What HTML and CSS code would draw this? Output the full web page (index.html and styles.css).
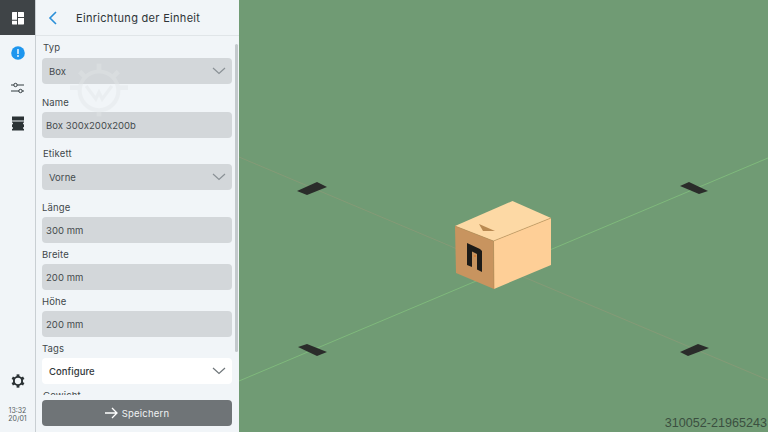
FILE: index.html
```html
<!DOCTYPE html>
<html lang="de">
<head>
    <meta charset="UTF-8">
    <title>Einrichtung der Einheit</title>
    <link rel="stylesheet" href="styles.css">
</head>
<body>
    <!-- Linke Leiste -->
    <nav class="rail">
        <div class="rail-item rail-home">
            <svg width="14" height="14" viewBox="0 0 14 14"><path fill="#fff" d="M1.500 1H6v7.800H1V1.500zM7 1h5.500l.5.500V6H7zM7 7h6v6l-.5.500H7zM1 9.800h5v3.700H1.500L1 13z"/></svg>
        </div>
        <div class="rail-item">
            <svg width="14" height="14" viewBox="0 0 14 14"><circle cx="7" cy="7" r="6.800" fill="#1e96ee"/><rect x="6.300" y="3" width="1.400" height="5" rx=".6" fill="#fff"/><circle cx="7" cy="10" r=".9" fill="#fff"/></svg>
        </div>
        <div class="rail-item">
            <svg width="15" height="14" viewBox="0 0 15 14" fill="none" stroke="#333c40" stroke-width="1"><path d="M1 4h2.800M7.200 4H14M1 10h8M12 10h2"/><circle cx="5.500" cy="4" r="1.700"/><circle cx="10.500" cy="10" r="1.700"/></svg>
        </div>
        <div class="rail-item rail-book">
            <svg width="14" height="15" viewBox="0 0 14 15"><path fill="#2b3235" d="M1 .5h12v4H1zM1 5.500h12v9H1z"/><g fill="#f1f5f8"><circle cx="1" cy="7.500" r="1"/><circle cx="13" cy="7.500" r="1"/><circle cx="1" cy="12" r="1"/><circle cx="13" cy="12" r="1"/></g></svg>
        </div>
        <div class="rail-spacer"></div>
        <div class="rail-gear">
            <svg width="14" height="14" viewBox="0 0 16 16"><circle cx="8" cy="8" r="4.700" fill="none" stroke="#2b3235" stroke-width="2.200"/><g fill="#2b3235"><rect x="6.400" y=".4" width="3.200" height="3.200"/><rect x="6.400" y="12.400" width="3.200" height="3.200"/><rect x="6.400" y=".4" width="3.200" height="3.200" transform="rotate(60 8 8)"/><rect x="6.400" y=".4" width="3.200" height="3.200" transform="rotate(120 8 8)"/><rect x="6.400" y=".4" width="3.200" height="3.200" transform="rotate(240 8 8)"/><rect x="6.400" y=".4" width="3.200" height="3.200" transform="rotate(300 8 8)"/></g></svg>
        </div>
        <div class="rail-clock">13:32<br>20/01</div>
    </nav>

    <!-- Formular -->
    <section class="panel">
        <header class="panel-head">
            <svg class="back" width="10" height="14" viewBox="0 0 10 14" fill="none" stroke="#2a8fd8" stroke-width="1.600"><path d="M8 1 2 7l6 6"/></svg>
            <h1>Einrichtung der Einheit</h1>
        </header>
        <div class="panel-body">
            <div class="field field-first">
                <label class="label-in label-tall">Typ</label>
                <div class="control select">Box <svg class="chev" width="14" height="8" viewBox="0 0 14 8" fill="none" stroke="#8a9196" stroke-width="1.200"><path d="M1 1l6 5.500L13 1"/></svg></div>
            </div>
            <div class="field field-wide">
                <label>Name</label>
                <div class="control input">Box 300x200x200b</div>
            </div>
            <div class="field field-mid">
                <label class="label-in label-tall">Etikett</label>
                <div class="control select">Vorne <svg class="chev" width="14" height="8" viewBox="0 0 14 8" fill="none" stroke="#8a9196" stroke-width="1.200"><path d="M1 1l6 5.500L13 1"/></svg></div>
            </div>
            <div class="field field-long">
                <label>Länge</label>
                <div class="control input">300 mm</div>
            </div>
            <div class="field">
                <label>Breite</label>
                <div class="control input">200 mm</div>
            </div>
            <div class="field">
                <label>Höhe</label>
                <div class="control input">200 mm</div>
            </div>
            <div class="field">
                <label>Tags</label>
                <div class="control select white">Configure <svg class="chev" width="14" height="8" viewBox="0 0 14 8" fill="none" stroke="#6f767a" stroke-width="1.200"><path d="M1 1l6 5.500L13 1"/></svg></div>
            </div>
            <div class="field">
                <label class="label-in">Gewicht</label>
            </div>
            <svg class="watermark" width="58" height="54" viewBox="0 0 72 66" fill="none" stroke="#e2e6e8" stroke-width="5"><circle cx="36" cy="34" r="24"/><path d="M20 28l12 16 4-8 4 8 12-16" stroke-width="4"/><path d="M0 30h12M60 30h12M36 0v10M36 58v8M12 10l8 8M60 10l-8 8" stroke-width="6"/></svg>
            <div class="scrollbar"></div>
        </div>
        <div class="panel-foot">
            <button class="save">
                <svg width="13" height="12" viewBox="0 0 13 12" fill="none" stroke="#fff" stroke-width="1.300"><path d="M0 6h12M7 1l5 5-5 5"/></svg>
                Speichern
            </button>
        </div>
    </section>

    <!-- 3D Ansicht -->
    <main class="scene">
        <svg class="scene-svg" width="529" height="432" viewBox="239 0 529 432">
            <path d="M239 157 768 380" stroke="#8d9a78" stroke-opacity=".7" fill="none"/>
            <path d="M239 381 768 158" stroke="#7fb97c" fill="none"/>
            <g fill="#2a2c2a">
                <path d="M297 191 317 182 327 187 307 195z"/>
                <path d="M680 186 689 182 708 191 699 194z"/>
                <path d="M298 347 307 344 327 352 317 356z"/>
                <path d="M680 352 698 344 709 348 688 356z"/>
            </g>
            <!-- Karton -->
            <path fill="#fdd9a5" d="M455 226 512.500 201 551 218 493.500 241z"/>
            <path fill="#fecf97" d="M493.500 241 551 218V265L494 289z"/>
            <path fill="#c8945f" d="M455 226 493.500 241 494 289 456 273z"/>
            <path fill="none" stroke="#b98a52" stroke-width=".6" d="M455 226 493.500 241 551 218M493.500 241 494 289"/>
            <path fill="#b98a52" d="M479 224 495 231 483 231z"/>
            <path fill="#1d1b18" d="M467 243 480 249 482 251 482 272 477 269.500 477 254 472 251.500 472 267 467 265z"/>
            <circle cx="475" cy="256" r="1" fill="#d9792c"/>
        </svg>
        <div class="stock-no">310052-21965243</div>
    </main>
</body>
</html>
```

FILE: styles.css
```css
* {
    margin: 0;
    padding: 0;
    box-sizing: border-box;
}
html, body {
    height: 100%;
    overflow: hidden;
}
body {
    display: flex;
    font-family: Inter, "Noto Sans", sans-serif;
    background-color: #709b74;
    color: #3c4346;
}

/* Leiste links */
.rail {
    width: 36px;
    flex: none;
    display: flex;
    flex-direction: column;
    align-items: center;
    background-color: #f1f5f8;
    border-right: 1px solid #c9cfd3;
}
.rail-item {
    width: 100%;
    height: 35px;
    display: flex;
    align-items: center;
    justify-content: center;
}
.rail-home {
    background-color: #3f4447;
}
.rail-book svg {
    margin-top: 2px;
}
.rail-spacer {
    flex: 1;
}
.rail-gear {
    height: 14px;
    margin-bottom: 21px;
}
.rail-clock {
    font-size: 7px;
    line-height: 8px;
    text-align: center;
    color: #555c60;
    margin-bottom: 9px;
}

/* Formular */
.panel {
    width: 203px;
    flex: none;
    display: flex;
    flex-direction: column;
    background-color: #f1f5f8;
}
.panel-head {
    height: 36px;
    flex: none;
    display: flex;
    align-items: center;
    padding-left: 12px;
    border-bottom: 1px solid #e0e5e8;
}
.back {
    margin-right: 18px;
}
.panel-head h1 {
    font-size: 11px;
    font-weight: 400;
    letter-spacing: .3px;
    color: #2d3437;
}
.panel-body {
    position: relative;
    flex: 1;
    padding: 0 7px 0 6px;
    overflow: hidden;
}
.watermark {
    position: absolute;
    left: 34px;
    top: 27px;
    opacity: .4;
}
.field {
    margin-top: 5px;
}
.field-first {
    margin-top: 5px;
}
.field-wide {
    margin-top: 12px;
}
.field-mid {
    margin-top: 9px;
}
.field-long {
    margin-top: 11px;
}
.field label {
    display: block;
    height: 16px;
    font-size: 9.5px;
    line-height: 13px;
    letter-spacing: .15px;
    color: #41484b;
}
.field .label-tall {
    height: 17px;
}
.label-in {
    padding-left: 1px;
}
.control {
    height: 26px;
    display: flex;
    align-items: center;
    justify-content: space-between;
    border-radius: 4px;
    background-color: #d3d7da;
    font-size: 9.5px;
    letter-spacing: .05px;
    color: #454b4e;
}
.select {
    padding: 0 6px 0 7px;
}
.input {
    padding-left: 4px;
}
.white {
    background-color: #fff;
    color: #33393c;
    font-weight: 500;
}
.scrollbar {
    position: absolute;
    top: 8px;
    right: 1px;
    width: 3px;
    height: 308px;
    border-radius: 2px;
    background-color: #c3c9cc;
}

/* Speichern */
.panel-foot {
    height: 37px;
    flex: none;
    padding: 5px 6px 0;
}
.save {
    width: 190px;
    height: 26px;
    display: flex;
    align-items: center;
    justify-content: center;
    gap: 4px;
    border: none;
    border-radius: 4px;
    background-color: #6f7477;
    color: #f0f2f3;
    font-family: inherit;
    font-size: 9.5px;
    letter-spacing: .2px;
}

/* 3D Ansicht */
.scene {
    position: relative;
    flex: 1;
    background-color: #709b74;
}
.scene-svg {
    display: block;
}
.stock-no {
    position: absolute;
    right: 1px;
    bottom: 2px;
    font-family: "Liberation Sans", Arial, sans-serif;
    font-size: 12.6px;
    color: #3b4f40;
}
```
